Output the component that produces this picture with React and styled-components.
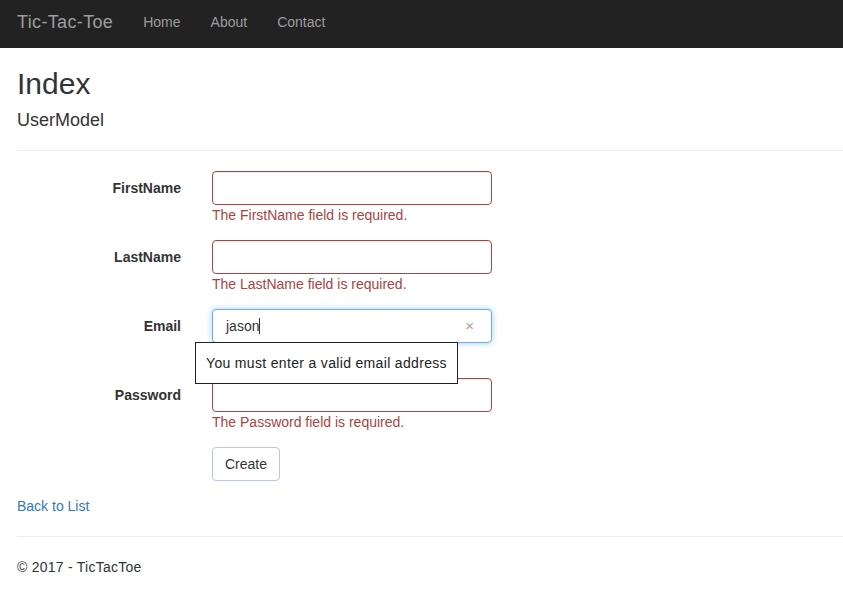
import React from 'react';
import styled, { createGlobalStyle } from 'styled-components';

const GlobalStyle = createGlobalStyle`
  html, body {
    margin: 0;
    padding: 0;
    background: #fff;
  }
  body {
    font-family: "Liberation Sans", Arial, sans-serif;
    font-size: 14px;
    line-height: 20px;
    color: #333;
  }
  * { box-sizing: border-box; }
`;

const Navbar = styled.nav`
  display: flex;
  align-items: flex-start;
  height: 48px;
  background: #222;
  padding-left: 17px;
`;

const Brand = styled.a`
  font-size: 18px;
  line-height: 20px;
  letter-spacing: 0.35px;
  padding: 12px 15px 0 0;
  color: #9d9d9d;
  text-decoration: none;
`;

const NavLink = styled.a`
  font-size: 14px;
  line-height: 20px;
  padding: 12px 15px 0;
  color: #9d9d9d;
  text-decoration: none;
`;

const Body = styled.div`
  padding-left: 17px;
`;

const Title = styled.h2`
  font-size: 30px;
  line-height: 33px;
  font-weight: 400;
  margin: 19px 0 10px;
`;

const Subtitle = styled.h4`
  font-size: 18px;
  line-height: 20px;
  font-weight: 400;
  margin: 10px 0 20px;
`;

const Rule = styled.hr`
  border: 0;
  border-top: 1px solid #e8eef0;
  margin: 0;
  height: 0;
`;

const Form = styled.form`
  padding-top: 20px;
`;

const Group = styled.div`
  position: relative;
  display: grid;
  grid-template-columns: 164px 280px;
  column-gap: 31px;
  margin-bottom: 15px;
`;

const Label = styled.label`
  text-align: right;
  font-weight: 700;
  padding-top: 7px;
  line-height: 20px;
`;

const Field = styled.div`
  position: relative;
  display: flex;
  flex-direction: column;
`;

const Input = styled.input`
  width: 280px;
  height: 34px;
  padding: 6px 12px;
  font-family: inherit;
  font-size: 14px;
  color: #555;
  background: #fff;
  border: 1px solid ${p => (p.$focused ? '#66afe9' : '#a94442')};
  border-radius: 4px;
  outline: none;
  box-shadow: ${p =>
    p.$focused ? '0 0 6px rgba(102,175,233,.6)' : 'inset 0 1px 1px rgba(0,0,0,.075)'};
`;

const Clear = styled.span`
  position: absolute;
  right: 18px;
  top: 7px;
  font-size: 15px;
  line-height: 20px;
  color: #b9998c;
`;

const Caret = styled.span`
  display: inline-block;
  width: 1px;
  height: 16px;
  background: #333;
  vertical-align: -3px;
`;

const FakeValue = styled.div`
  position: absolute;
  left: 14px;
  top: 7px;
  font-size: 14px;
  line-height: 20px;
  color: #333;
  pointer-events: none;
`;

const Help = styled.span`
  display: block;
  height: 20px;
  color: #a94442;
  line-height: 20px;
`;

const Tooltip = styled.div`
  position: absolute;
  left: -17px;
  top: 33px;
  width: 263px;
  height: 42px;
  padding: 10px 10px;
  background: #fff;
  border: 1px solid #222;
  font-size: 14px;
  line-height: 20px;
  letter-spacing: 0.33px;
  color: #222;
  z-index: 2;
  white-space: nowrap;
`;

const Button = styled.button`
  grid-column: 2;
  justify-self: start;
  height: 34px;
  padding: 6px 12px;
  font-family: inherit;
  font-size: 14px;
  color: #333;
  background: #fff;
  border: 1px solid #bcc6ec;
  border-radius: 4px;
`;

const BackLink = styled.a`
  display: block;
  color: #337ab7;
  text-decoration: none;
  line-height: 20px;
  margin-bottom: 20px;
`;

const Footer = styled.footer`
  padding-top: 20px;
  line-height: 20px;
  letter-spacing: 0.25px;
`;

const fields = [
  { name: 'FirstName' },
  { name: 'LastName' },
  { name: 'Email', value: 'jason', focused: true, tooltip: 'You must enter a valid email address' },
  { name: 'Password', type: 'password' },
];

export default function App() {
  return (
    <>
      <GlobalStyle />
      <Navbar>
        <Brand href="#">Tic-Tac-Toe</Brand>
        <NavLink href="#">Home</NavLink>
        <NavLink href="#">About</NavLink>
        <NavLink href="#">Contact</NavLink>
      </Navbar>
      <Body>
        <Title>Index</Title>
        <Subtitle>UserModel</Subtitle>
        <Rule />
        <Form onSubmit={e => e.preventDefault()}>
          {fields.map(f => (
            <Group key={f.name}>
              <Label>{f.name}</Label>
              <Field>
                <Input type={f.type || 'text'} $focused={f.focused} readOnly />
                {f.value && (
                  <FakeValue>
                    {f.value}
                    <Caret />
                  </FakeValue>
                )}
                {f.focused && <Clear>×</Clear>}
                <Help>{f.focused ? '' : `The ${f.name} field is required.`}</Help>
                {f.tooltip && <Tooltip>{f.tooltip}</Tooltip>}
              </Field>
            </Group>
          ))}
          <Group>
            <Button type="submit">Create</Button>
          </Group>
        </Form>
        <BackLink href="#">Back to List</BackLink>
        <Rule />
        <Footer>© 2017 - TicTacToe</Footer>
      </Body>
    </>
  );
}
